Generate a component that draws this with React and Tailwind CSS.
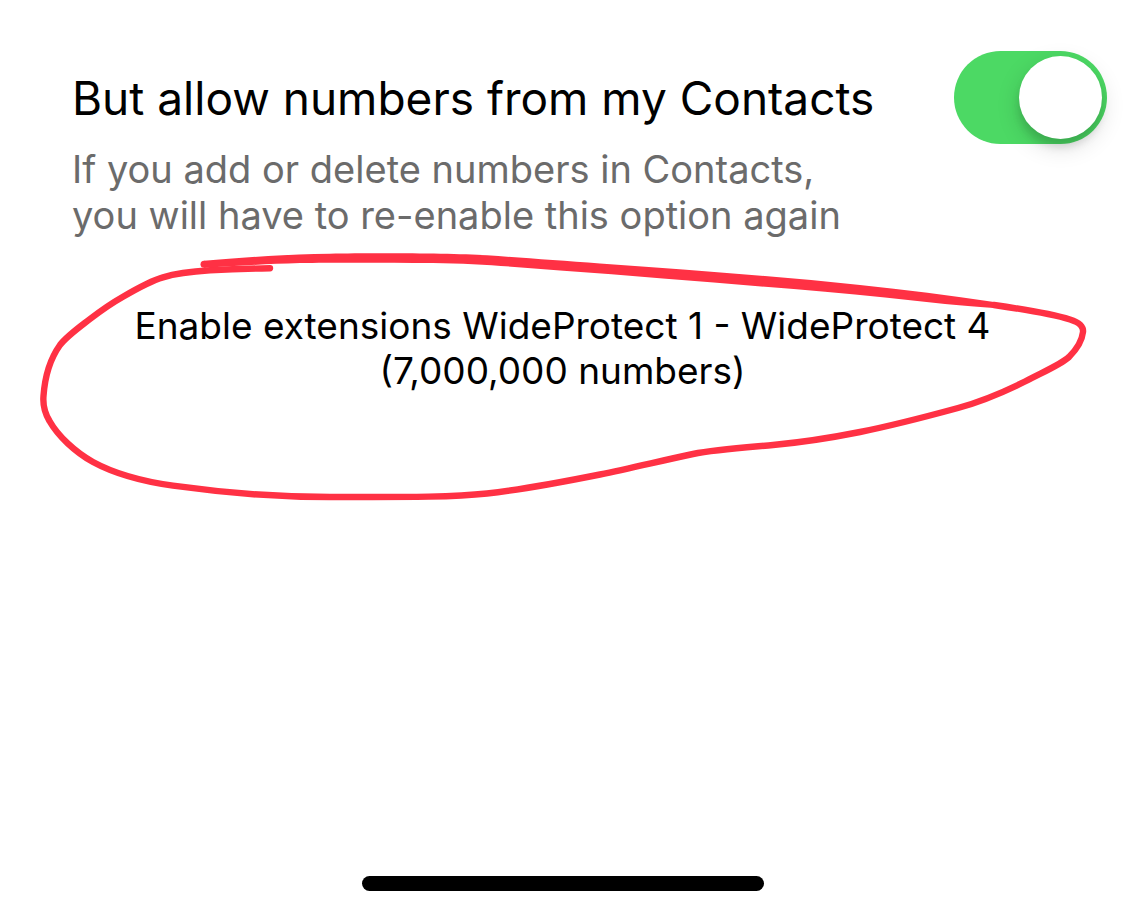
import { useState } from "react";

function HandDrawnLoop() {
  return (
    <svg
      viewBox="0 0 1125 520"
      className="pointer-events-none absolute inset-x-0 top-0 w-full"
      aria-hidden="true"
    >
      <path
        d="M994 305 C1025 309.5 1052 314 1070 319.5 C1081 323 1083.5 327 1083 332 C1082 341 1076 350 1069 357 C1060 365 1045 371 1025 381.5 C1005 391.5 985 400.5 958 408 C925 417 890 426 860 432 C830 438 800 442.5 773 445 C745 447.5 715 449.5 693 454 C660 461 630 468.5 600 474.5 C560 482.5 520 490 487 493.5 C450 497.5 400 497 330 497 C280 497 225 493 173 485.7 C140 481 115 474 93 462 C75 452 58 436 49.5 421 C43.5 411 43 402 43.5 396 C45 375 50 359 60 345 C67 336 77 329 90 319 C101 310.5 111 303.5 123 296.7 C137 288.5 150 281 163 277.3 C178 272.8 195 271.3 210 270.3 C230 269.2 250 268.6 270 268.3"
        fill="none"
        stroke="#ff3144"
        strokeWidth="6.4"
        strokeLinecap="round"
        strokeLinejoin="round"
      />
      <path
        d="M204 260.7 C240 258 285 254 330 253.7 C370 253 450 253 487 255.3 C520 257.5 560 260.5 600 263.5 C690 270 775 276 860 285 C905 289.5 950 295.5 994 302 L994 308 C975 306.5 960 305.3 945 304 C905 299.5 865 295 825 291.7 C740 285 650 277 560 270.5 C520 267.5 480 263.5 433 263 C380 262.6 330 262.6 300 263 C265 264 235 266 204 267.7 Z"
        fill="#ff3144"
      />
      <circle cx="204" cy="264.2" r="3.5" fill="#ff3144" />
    </svg>
  );
}

export default function App() {
  const [allowed, setAllowed] = useState(true);

  return (
    <main className="relative flex min-h-screen flex-col overflow-hidden bg-white pb-6 font-['Inter','Liberation_Sans',sans-serif] text-black">
      <section className="flex items-start justify-between gap-6 pt-[51px] pr-[18px] pl-[72px]">
        <div className="pt-[15px]">
          <label htmlFor="allow-contacts" className="block text-[46px] leading-[64px]">
            But allow numbers from my Contacts
          </label>
          <p id="allow-hint" className="mt-4 text-[38px] leading-[46px] text-[#6b6b6b]">
            If you add or delete numbers in Contacts,
            <br />
            you will have to re-enable this option again
          </p>
        </div>
        <input
          id="allow-contacts"
          type="checkbox"
          role="switch"
          aria-describedby="allow-hint"
          checked={allowed}
          onChange={(e) => setAllowed(e.target.checked)}
          className="flex h-[93px] w-[153px] shrink-0 appearance-none items-center rounded-full bg-[#e5e5ea] px-[5px] before:size-[83px] before:rounded-full before:bg-white before:shadow-[0_8px_24px_rgba(0,0,0,0.14),0_8px_8px_rgba(0,0,0,0.12)] checked:justify-end checked:bg-[#4cd964]"
        />
      </section>

      <p className="mt-[65px] px-6 text-center text-[37px] leading-[45px]">
        Enable extensions WideProtect 1 - WideProtect 4
        <br />
        (7,000,000 numbers)
      </p>

      <HandDrawnLoop />

      <div className="mx-auto mt-auto h-[15px] w-[402px] rounded-full bg-black" />
    </main>
  );
}
